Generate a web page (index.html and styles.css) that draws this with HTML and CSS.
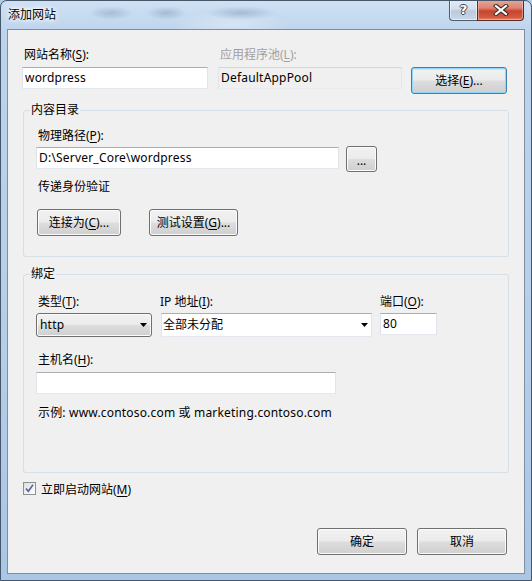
FILE: index.html
```html
<!DOCTYPE html>
<html lang="zh-CN">
<head>
<meta charset="utf-8">
<title>添加网站</title>
<link rel="stylesheet" href="styles.css">
</head>
<body>
<div class="window">
  <div class="titlebar">
    <div class="title">添加网站</div>
    <div class="caption">
      <div class="cap-btn help"><span class="q">?</span></div>
      <div class="cap-btn close">
        <svg width="16" height="12" viewBox="0 0 16 12">
          <path d="M3 2 L13 10 M13 2 L3 10" stroke="#3b2a28" stroke-width="4.2" stroke-linecap="square"/>
          <path d="M3 2 L13 10 M13 2 L3 10" stroke="#ffffff" stroke-width="2.2" stroke-linecap="square"/>
        </svg>
      </div>
    </div>
  </div>
  <div class="client">
    <div class="top-grid">
      <div class="lbl">网站名称(<u>S</u>):</div>
      <div class="lbl disabled">应用程序池(<u>L</u>):</div>
      <div></div>
      <div class="textbox site">wordpress</div>
      <div class="textbox readonly pool">DefaultAppPool</div>
      <button class="btn default select">选择(<u>E</u>)...</button>
    </div>

    <fieldset class="group g1">
      <legend>内容目录</legend>
      <div class="group-body body1">
        <div class="lbl">物理路径(<u>P</u>):</div>
        <div class="path-row">
          <div class="textbox path">D:\Server_Core\wordpress</div>
          <button class="btn browse">...</button>
        </div>
        <div class="lbl auth">传递身份验证</div>
        <div class="btn-row">
          <button class="btn connect">连接为(<u>C</u>)...</button>
          <button class="btn test">测试设置(<u>G</u>)...</button>
        </div>
      </div>
    </fieldset>

    <fieldset class="group g2">
      <legend>绑定</legend>
      <div class="group-body body2">
        <div class="bind-grid">
          <div class="lbl">类型(<u>T</u>):</div>
          <div class="lbl ip-lbl">IP 地址(<u>I</u>):</div>
          <div class="lbl port-lbl">端口(<u>O</u>):</div>
          <div class="combo-btn">
            <span class="latin">http</span>
            <svg width="7" height="4" viewBox="0 0 7 4"><path d="M0 0 H7 L3.5 4 Z" fill="#000"/></svg>
          </div>
          <div class="combo-edit">
            <span>全部未分配</span>
            <svg width="7" height="4" viewBox="0 0 7 4"><path d="M0 0 H7 L3.5 4 Z" fill="#000"/></svg>
          </div>
          <div class="textbox port">80</div>
        </div>
        <div class="lbl host-lbl">主机名(<u>H</u>):</div>
        <div class="textbox host"></div>
        <div class="lbl example">示例: www.contoso.com 或 marketing.contoso.com</div>
      </div>
    </fieldset>

    <div class="check-row">
      <span class="checkbox">
        <svg width="11" height="11" viewBox="0 0 11 11"><path d="M2 5.5 L4.3 8.3 L9 1.8" fill="none" stroke="#56699a" stroke-width="1.7"/></svg>
      </span>
      <span class="check-lbl">立即启动网站(<u>M</u>)</span>
    </div>

    <div class="footer">
      <button class="btn ok">确定</button>
      <button class="btn cancel">取消</button>
    </div>
  </div>
</div>
</body>
</html>
```

FILE: styles.css
```css
* { box-sizing: border-box; }
html, body { margin: 0; padding: 0; }
body {
  width: 532px;
  height: 581px;
  overflow: hidden;
  font-family: "Noto Sans", "Noto Sans CJK SC", sans-serif;
  font-size: 12px;
  line-height: 16px;
  color: #000;
  background: #b4cbe4;
}
u { text-decoration: underline; text-underline-offset: 2px; }

.window {
  width: 532px;
  height: 581px;
  border: 1px solid #46566b;
  border-radius: 7px 7px 0 0;
  overflow: hidden;
  display: flex;
  flex-direction: column;
  background:
    radial-gradient(ellipse 22px 7px at 110px 12px, rgba(80,110,150,0.28), transparent),
    radial-gradient(ellipse 20px 7px at 165px 12px, rgba(80,110,150,0.30), transparent),
    radial-gradient(ellipse 35px 7px at 240px 12px, rgba(80,110,150,0.30), transparent),
    radial-gradient(ellipse 60px 14px at 230px 24px, rgba(255,255,255,0.35), transparent),
    linear-gradient(180deg, #cfe0f3 0%, #bcd3ec 6%, #b7cfe9 50%, #aac6e5 100%);
}

.titlebar {
  height: 28px;
  flex: none;
  display: flex;
  align-items: flex-start;
  padding-left: 7px;
}
.title {
  margin-top: 6px;
  line-height: 16px;
  text-shadow: 0 0 5px #fff, 0 0 3px #fff, 0 0 8px rgba(255,255,255,0.9);
}
.caption {
  margin-left: auto;
  margin-right: 7px;
  margin-top: -1px;
  display: flex;
}
.cap-btn {
  height: 21px;
  display: flex;
  align-items: center;
  justify-content: center;
  border: 1px solid #4b5b70;
  border-top: none;
}
.help {
  width: 28px;
  border-right: none;
  border-radius: 0 0 0 4px;
  background: linear-gradient(180deg, #e4ecf5 0%, #d3dfec 45%, #bccbdc 55%, #c9d7e6 100%);
  box-shadow: inset 0 0 0 1px rgba(255,255,255,0.55);
}
.help .q {
  font-family: "DejaVu Sans", sans-serif;
  font-weight: bold;
  font-size: 13px;
  color: #fff;
  text-shadow: 1px 0 0 #39475a, -1px 0 0 #39475a, 0 1px 0 #39475a, 0 -1px 0 #39475a;
  line-height: 14px;
}
.close {
  width: 47px;
  border-color: #5a2a22;
  border-radius: 0 0 4px 0;
  background: linear-gradient(180deg, #e8a898 0%, #dc8470 40%, #c7442f 55%, #d2583f 85%, #e0826a 100%);
  box-shadow: inset 0 0 0 1px rgba(255,220,210,0.45);
}

.client {
  margin: 0 6px 6px;
  height: 545px;
  flex: none;
  border: 1px solid #7f8fa3;
  background: #f0f0f0;
  display: flex;
  flex-direction: column;
  padding: 17px 17px 18px 14px;
}

.lbl { padding-left: 2px; line-height: 16px; white-space: nowrap; }
.disabled { color: #a0a0a0; }

.top-grid {
  display: grid;
  grid-template-columns: 196px 193px 96px;
  row-gap: 4px;
  align-items: start;
}

.textbox {
  height: 22px;
  background: #fff;
  border: 1px solid;
  border-color: #abadb3 #e2e3ea #e3e9ef #e2e3ea;
  padding: 2px 2px 0;
  line-height: 16px;
  white-space: nowrap;
  overflow: hidden;
  letter-spacing: 0.2px;
}
.latin { letter-spacing: 0.2px; }
.site { width: 186px; }
.pool { width: 184px; }
.readonly { background: #f0f0f0; border-color: #d5d7dc #e3e4e8 #e8ebef #e3e4e8; }

.btn {
  font: inherit;
  color: #000;
  height: 27px;
  padding: 0;
  border: 1px solid #707070;
  border-radius: 3px;
  background: linear-gradient(180deg, #f2f2f2 0%, #ebebeb 48%, #dddddd 52%, #cfcfcf 100%);
  box-shadow: inset 0 0 0 1px #fbfbfb;
  text-align: center;
  line-height: 16px;
}
.default {
  border-color: #3c7fb1;
  box-shadow: inset 0 0 0 1px #8fd6f8, inset 0 1px 0 1px #bfe9fc;
}
.select { width: 96px; }

.group {
  margin: 8px -2px 0 1px;
  padding: 0;
  border: 1px solid #d5dfe5;
  border-radius: 3px;
  min-width: 0;
}
.group legend {
  margin-left: 6px;
  padding: 0 1px;
  line-height: 16px;
}
.g2 { margin-top: 9px; }

.body1 { padding: 10px 12px 20px 12px; }
.body1 > .lbl:first-child { margin-bottom: 2px; }
.path-row { display: flex; align-items: flex-start; gap: 7px; }
.path { width: 303px; margin-top: 1px; }
.browse { width: 31px; height: 26px; padding-top: 3px; }
.auth { margin-top: 7px; }
.btn-row { display: flex; gap: 28px; margin-top: 14px; }
.connect { width: 84px; margin-left: 1px; }
.test { width: 89px; }

.body2 { padding: 12px 12px 51px 12px; }
.bind-grid {
  display: grid;
  grid-template-columns: 125px 219px 57px;
  row-gap: 3px;
  align-items: start;
}
.ip-lbl { padding-left: 0; margin-left: -1px; }
.port-lbl { padding-left: 0; }
.combo-btn {
  width: 116px;
  height: 24px;
  border: 1px solid #707070;
  border-radius: 3px;
  background: linear-gradient(180deg, #f2f2f2 0%, #ebebeb 48%, #dddddd 52%, #cfcfcf 100%);
  box-shadow: inset 0 0 0 1px #fbfbfb;
  display: flex;
  align-items: center;
  justify-content: space-between;
  padding: 0 4px 0 3px;
}
.combo-edit {
  width: 211px;
  height: 24px;
  background: #fff;
  border: 1px solid;
  border-color: #abadb3 #e2e3ea #e3e9ef #e2e3ea;
  display: flex;
  align-items: center;
  justify-content: space-between;
  padding: 0 3px 0 1px;
}
.port { width: 57px; }
.host-lbl { margin-top: 15px; }
.host { width: 300px; margin-top: 4px; }
.example { margin-top: 11px; letter-spacing: 0.18px; }

.check-row {
  margin-top: 9px;
  display: flex;
  align-items: flex-start;
  gap: 5px;
  line-height: 16px;
}
.checkbox {
  width: 13px;
  height: 13px;
  margin-left: 1px;
  border: 1px solid #8e8f8f;
  background: linear-gradient(135deg, #dcdcdc 0%, #f4f4f4 60%, #ffffff 100%);
  display: flex;
  align-items: center;
  justify-content: center;
}
.checkbox svg { display: block; }

.footer {
  margin-top: auto;
  display: flex;
  justify-content: flex-end;
  gap: 10px;
}
.ok, .cancel { width: 90px; }
```
